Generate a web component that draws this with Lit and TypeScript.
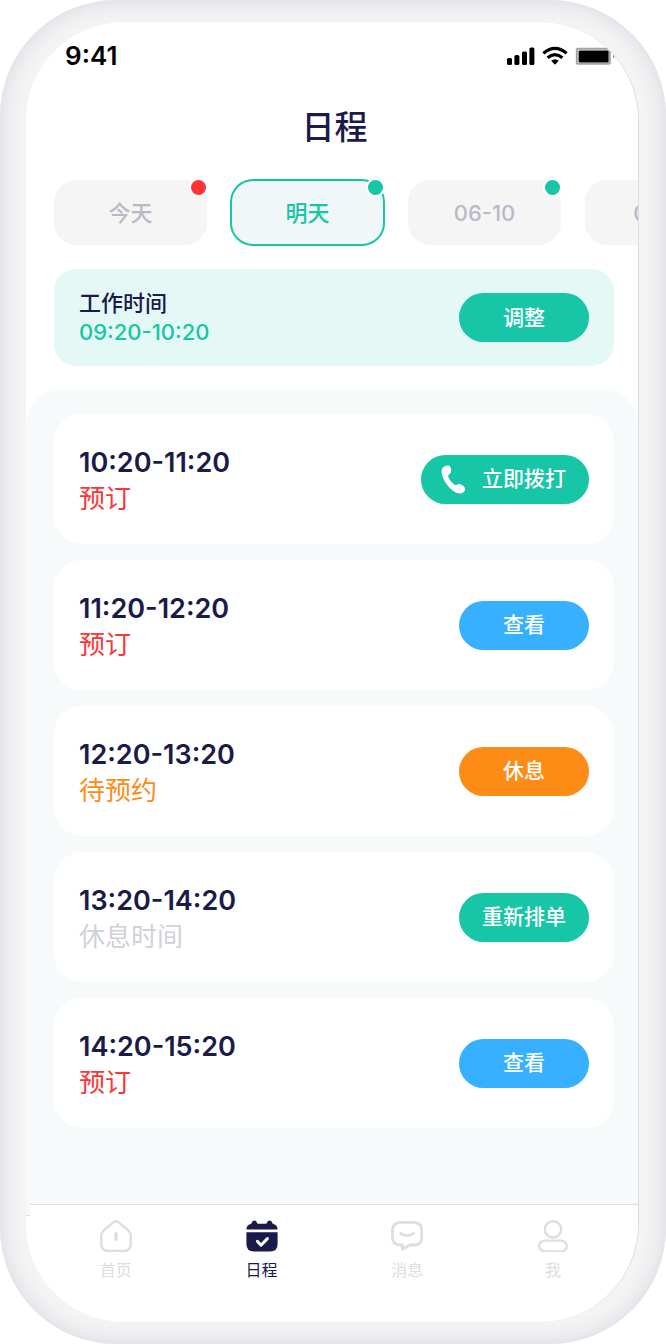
import { LitElement, html, css, svg } from "lit";
import { customElement, state } from "lit/decorators.js";
import { classMap } from "lit/directives/class-map.js";

interface Day {
  label: string;
  badge?: "red" | "green";
}

interface Slot {
  time: string;
  status: string;
  tone: "booked" | "pending" | "rest";
  action: string;
  color: "green" | "blue" | "orange";
  call?: boolean;
}

const DAYS: Day[] = [
  { label: "今天", badge: "red" },
  { label: "明天", badge: "green" },
  { label: "06-10", badge: "green" },
  { label: "06-11" },
];

const SLOTS: Slot[] = [
  { time: "10:20-11:20", status: "预订", tone: "booked", action: "立即拨打", color: "green", call: true },
  { time: "11:20-12:20", status: "预订", tone: "booked", action: "查看", color: "blue" },
  { time: "12:20-13:20", status: "待预约", tone: "pending", action: "休息", color: "orange" },
  { time: "13:20-14:20", status: "休息时间", tone: "rest", action: "重新排单", color: "green" },
  { time: "14:20-15:20", status: "预订", tone: "booked", action: "查看", color: "blue" },
];

const homeIcon = svg`
  <path d="M13.4 2.2 L3.6 10.6 Q1.2 12.8 1.2 16 V23.6 Q1.2 31 8.4 31 H23.6 Q30.8 31 30.8 23.6 V16 Q30.8 12.8 28.4 10.6 L18.6 2.2 Q16 0.4 13.4 2.2 Z" fill="none" stroke="currentColor" stroke-width="2.4" stroke-linejoin="round"/>
  <path d="M16 13.8 V19.2" stroke="currentColor" stroke-width="3.4" stroke-linecap="round"/>`;

const calendarIcon = svg`
  <path d="M0.4 9.4 Q0.6 5 4.6 4 Q5.6 3.8 5.8 2.8 Q6.4 0.4 8.4 0.4 Q10.4 0.4 11 2.8 Q11.3 3.7 12 3.7 H20 Q20.7 3.7 21 2.8 Q21.6 0.4 23.6 0.4 Q25.6 0.4 26.2 2.8 Q26.4 3.8 27.4 4 Q31.4 5 31.6 9.4 Z" fill="currentColor"/>
  <path d="M0.4 12.2 H31.6 V24 Q31.6 31.6 24 31.6 H8 Q0.4 31.6 0.4 24 Z" fill="currentColor"/>
  <path d="M11.4 21.4 L15 25.2 L21.4 18.6" fill="none" stroke="#fff" stroke-width="3" stroke-linecap="round" stroke-linejoin="round"/>`;

const messageIcon = svg`
  <path d="M10 2.4 H22 Q30.8 2.4 30.8 10.4 V17 Q30.8 25 23 25 H18.8 L11.4 29.2 V25 H9.6 Q1.4 25 1.4 17 V10.4 Q1.4 2.4 10 2.4 Z" fill="none" stroke="currentColor" stroke-width="2.8" stroke-linejoin="round"/>
  <path d="M9.4 13.4 Q16 17.6 22.8 13.4" fill="none" stroke="currentColor" stroke-width="2.6" stroke-linecap="round"/>`;

const userIcon = svg`
  <circle cx="16" cy="9.4" r="8.1" fill="none" stroke="currentColor" stroke-width="2.4"/>
  <rect x="2.2" y="20.6" width="27.6" height="10.8" rx="5.4" fill="none" stroke="currentColor" stroke-width="2.4"/>`;

const NAV = [
  { label: "首页", icon: homeIcon },
  { label: "日程", icon: calendarIcon },
  { label: "消息", icon: messageIcon },
  { label: "我", icon: userIcon },
];

@customElement("app-root")
export class AppRoot extends LitElement {
  @state() private day = 1;
  @state() private page = 1;

  static styles = css`
    :host {
      --ink: #1a1a4b;
      --green: #16c6a6;
      --red: #fd3434;
      --panel: #f6fafb;
      --line: #dddde0;
      display: block;
      background: #fff;
      color: var(--ink);
      font-family: Inter, "Noto Sans CJK SC", sans-serif;
    }
    *,
    *::before {
      box-sizing: border-box;
    }
    button {
      border: 0;
      margin: 0;
      padding: 0;
      font-family: inherit;
      cursor: pointer;
    }
    .frame {
      display: flex;
      min-height: 100vh;
      padding: 22px 27px 22px 26px;
      border-radius: 116px;
      background: #f4f4f4;
      box-shadow: inset 0 0 22px #d6d5df;
    }
    .screen {
      flex: 1;
      min-width: 0;
      display: flex;
      flex-direction: column;
      overflow: hidden;
      border-right: 1px solid var(--line);
      border-radius: 98px;
      background: #fff;
    }
    .status {
      display: flex;
      align-items: center;
      justify-content: space-between;
      padding: 18px 23px 16px 39px;
      color: #000;
      font-size: 26px;
      font-weight: 600;
      line-height: 32px;
    }
    .signals {
      display: block;
      width: 110px;
      height: 20px;
    }
    h1 {
      margin: 0;
      padding: 14px 0 28px 5px;
      font-size: 33px;
      font-weight: 500;
      line-height: 50px;
      text-align: center;
    }
    .days {
      display: flex;
      gap: 24px;
      overflow-x: auto;
      scrollbar-width: none;
      margin-top: -1px;
      padding: 1px 0 24px 28px;
    }
    .day {
      position: relative;
      flex: none;
      width: 153px;
      height: 65px;
      border-radius: 22px;
      background: #f5f5f5;
      color: #bab9c8;
      font-size: 22px;
      font-weight: 500;
      line-height: 32px;
    }
    .day.selected {
      outline: 2px solid var(--green);
      outline-offset: -1px;
      background: #f1f7f8;
      color: var(--green);
    }
    .badge {
      position: absolute;
      top: 0;
      right: 1px;
      width: 15px;
      height: 15px;
      border-radius: 50%;
      background: var(--green);
      box-shadow: 0 0 0 2px #fff;
    }
    .badge.red {
      background: var(--red);
    }
    .hours,
    .slot {
      display: flex;
      align-items: center;
      justify-content: space-between;
      padding: 0 25px;
    }
    .hours {
      margin: 0 24px 24px 28px;
      min-height: 97px;
      border-radius: 22px;
      background: #e4f8f5;
    }
    .hours h2,
    .hours p {
      margin: 0;
      font-size: 22px;
      font-weight: 500;
      line-height: 29px;
    }
    .hours p {
      color: var(--green);
    }
    .pill {
      display: flex;
      align-items: center;
      justify-content: center;
      gap: 16px;
      min-width: 130px;
      height: 49px;
      padding: 0 23px;
      border-radius: 25px;
      color: #fff;
      font-size: 21px;
      font-weight: 500;
      line-height: 32px;
    }
    .pill.green {
      background: var(--green);
    }
    .pill.blue {
      background: #37b0ff;
    }
    .pill.orange {
      background: #fd8c16;
    }
    .pill.call {
      padding-left: 20px;
    }
    .phone {
      width: 25px;
      height: 29px;
    }
    .list {
      flex: 1;
      display: flex;
      flex-direction: column;
      gap: 16px;
      margin: 0;
      padding: 24px 24px 24px 28px;
      border-radius: 34px 34px 0 0;
      background: var(--panel);
      list-style: none;
    }
    .slot {
      min-height: 130px;
      border-radius: 28px;
      background: #fff;
    }
    .slot div {
      padding-top: 4px;
    }
    .slot h3,
    .slot p {
      margin: 0;
      line-height: 36px;
    }
    .slot h3 {
      font-size: 27px;
      font-weight: 600;
    }
    .slot p {
      font-size: 26px;
      font-weight: 400;
    }
    .booked {
      color: var(--red);
    }
    .pending {
      color: #fd8c16;
    }
    .rest {
      color: #d0d1da;
    }
    nav {
      position: relative;
      display: flex;
      margin-left: 4px;
      padding: 15px 12px 40px 13px;
      border-top: 1px solid var(--line);
    }
    nav::before {
      content: "";
      position: absolute;
      top: -1px;
      left: -4px;
      width: 4px;
      height: 12px;
      border-bottom: 1px solid var(--line);
      background: var(--panel);
    }
    .tab {
      flex: 1;
      display: flex;
      flex-direction: column;
      align-items: center;
      gap: 6px;
      color: #dedede;
      font-size: 16px;
      line-height: 24px;
      text-decoration: none;
    }
    .tab svg {
      width: 32px;
      height: 32px;
    }
    .tab.current {
      color: var(--ink);
    }
  `;

  private renderStatus() {
    return html`
      <div class="status">
        <span>9:41</span>
        <svg class="signals" viewBox="0 0 110 20" aria-hidden="true">
          <rect x="2" y="12" width="5" height="7" rx="1.5" />
          <rect x="9.4" y="9" width="5" height="10" rx="1.5" />
          <rect x="17" y="5.4" width="5" height="13.6" rx="1.5" />
          <rect x="24.4" y="1.6" width="5" height="17.4" rx="1.5" />
          <g fill="none" stroke="#000" stroke-width="3.2">
            <path d="M38.4 7.4 Q50 -2.6 61.6 7.4" />
            <path d="M42.6 11.8 Q50 5.4 57.4 11.8" />
          </g>
          <path d="M46.2 14.8 Q50 11.8 53.8 14.8 L50 18.8 Z" />
          <rect x="71.8" y="2.8" width="33" height="15" rx="1" fill="none" stroke="#a3a3a3" stroke-width="2" />
          <rect x="73.6" y="4.4" width="30" height="12" rx="1" />
          <path d="M108 8 Q111 10.300 108 12.600 Z" fill="#999" />
        </svg>
      </div>
    `;
  }

  private renderSlot(s: Slot) {
    return html`
      <li class="slot">
        <div>
          <h3>${s.time}</h3>
          <p class=${s.tone}>${s.status}</p>
        </div>
        <button class=${classMap({ pill: true, [s.color]: true, call: !!s.call })}>
          ${s.call
            ? html`<svg class="phone" viewBox="0 0 25 29" aria-hidden="true">
                <path
                  d="M1 4 C2.2 1.400 5.600 0.300 8 0.700 C9.800 1.100 10.600 5 10 7.200 C9.600 8.800 7.300 9.200 7.200 10.800 C7.200 13.600 11.400 18.800 14 19.900 C15.800 20.500 16.600 18.800 18.400 19 C20.600 19.300 24 22 24.200 23.800 C24.300 26 21.600 28.600 19 28.600 C10.400 28.600 -1.600 12.600 1 4 Z"
                  fill="#fff"
                />
              </svg>`
            : null}
          <span>${s.action}</span>
        </button>
      </li>
    `;
  }

  render() {
    return html`
      <div class="frame">
        <main class="screen">
          ${this.renderStatus()}
          <h1>日程</h1>
          <div class="days">
            ${DAYS.map(
              (d, i) => html`
                <button
                  class=${classMap({ day: true, selected: i === this.day })}
                  aria-pressed=${i === this.day}
                  @click=${() => (this.day = i)}
                >
                  ${d.label}
                  ${d.badge ? html`<span class="badge ${d.badge}"></span>` : null}
                </button>
              `
            )}
          </div>
          <section class="hours">
            <div>
              <h2>工作时间</h2>
              <p>09:20-10:20</p>
            </div>
            <button class="pill green">调整</button>
          </section>
          <ul class="list">
            ${SLOTS.map((s) => this.renderSlot(s))}
          </ul>
          <nav>
            ${NAV.map(
              (n, i) => html`
                <a
                  href="#"
                  class=${classMap({ tab: true, current: i === this.page })}
                  @click=${(e: Event) => {
                    e.preventDefault();
                    this.page = i;
                  }}
                >
                  <svg viewBox="0 0 32 32" aria-hidden="true">${n.icon}</svg>
                  <span>${n.label}</span>
                </a>
              `
            )}
          </nav>
        </main>
      </div>
    `;
  }
}
